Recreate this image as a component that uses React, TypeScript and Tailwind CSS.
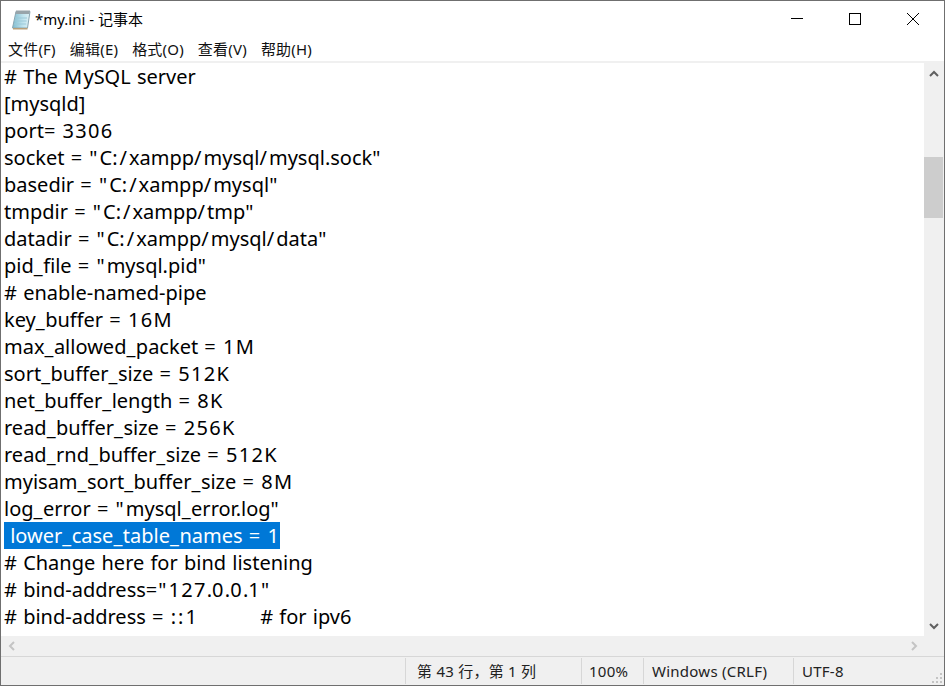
import React from 'react';

const lines = [
  '# The MySQL server',
  '[mysqld]',
  'port= 3306',
  'socket = "C:/xampp/mysql/mysql.sock"',
  'basedir = "C:/xampp/mysql"',
  'tmpdir = "C:/xampp/tmp"',
  'datadir = "C:/xampp/mysql/data"',
  'pid_file = "mysql.pid"',
  '# enable-named-pipe',
  'key_buffer = 16M',
  'max_allowed_packet = 1M',
  'sort_buffer_size = 512K',
  'net_buffer_length = 8K',
  'read_buffer_size = 256K',
  'read_rnd_buffer_size = 512K',
  'myisam_sort_buffer_size = 8M',
  'log_error = "mysql_error.log"',
];

const after = ['# Change here for bind listening', '# bind-address="127.0.0.1"', '# bind-address = ::1          # for ipv6'];

const menus = ['文件(F)', '编辑(E)', '格式(O)', '查看(V)', '帮助(H)'];

// the reference font sets these glyphs wider than Noto Sans does
function spacingFor(ch: string) {
  if (/[/":]/.test(ch)) return 'tracking-[2px]';
  if (ch === 'M') return 'tracking-[1.2px]';
  if (/[0-9]/.test(ch)) return 'tracking-[1.3px]';
  if (ch === '=' || ch === ' ') return 'tracking-[1px]';
  if (ch === '_') return 'tracking-[0.5px]';
  return '';
}

function Line({ text }: { text: string }) {
  const parts = text.match(/[/":M0-9= _]|[^/":M0-9= _]+/g) ?? [];
  return (
    <>
      {parts.map((p, i) => (
        <span key={i} className={spacingFor(p)}>
          {p}
        </span>
      ))}
    </>
  );
}

function NotepadIcon() {
  return (
    <svg width="20" height="21" viewBox="0 0 20 21">
      <defs>
        <linearGradient id="page" x1="0" y1="0" x2="1" y2="0">
          <stop offset="0" stopColor="#7fbccf" />
          <stop offset="0.6" stopColor="#bfe3ee" />
          <stop offset="1" stopColor="#dff1f6" />
        </linearGradient>
      </defs>
      <path d="M5 2.5 L19 2.5 L16.5 19 L1.5 19 Z" fill="url(#page)" stroke="#8aa6b2" strokeWidth="1" />
      <path d="M5 1.5 L19 1.5 L18.4 5 L4.5 5 Z" fill="#98a4aa" />
      <path d="M4 9h12M3.6 12h12M3.2 15h12" stroke="#9cc9d8" strokeWidth="1" />
      <path d="M2 19 L16.5 19 L16.5 20.5 L2 20.5 Z" fill="#b89f78" />
    </svg>
  );
}

export default function App() {
  return (
    <div className="w-[945px] h-[686px] flex flex-col bg-white border border-[#6f6f6f] overflow-hidden font-['Noto_Sans','Noto_Sans_CJK_SC',sans-serif] text-black">
      {/* title bar */}
      <div className="h-[36px] flex items-center shrink-0">
        <div className="ml-[10px] mt-[1px]">
          <NotepadIcon />
        </div>
        <span className="ml-[4px] text-[15px]">*my.ini - 记事本</span>
        <div className="ml-auto flex items-center pr-[14px]">
          <svg width="14" height="14" viewBox="0 0 14 14" className="mr-[44px]">
            <path d="M1 6.5h12" stroke="#000" strokeWidth="1" />
          </svg>
          <svg width="14" height="14" viewBox="0 0 14 14" className="mr-[44px]">
            <rect x="1.5" y="1.5" width="11" height="11" fill="none" stroke="#000" strokeWidth="1" />
          </svg>
          <svg width="14" height="14" viewBox="0 0 14 14" className="mr-[10px]">
            <path d="M1 1l12 12M13 1L1 13" stroke="#000" strokeWidth="1" />
          </svg>
        </div>
      </div>

      {/* menu */}
      <div className="h-[24px] flex items-center shrink-0 pl-[7px] gap-[14px] text-[15px] tracking-[0.2px] text-[#111]">
        {menus.map((m) => (
          <span key={m}>{m}</span>
        ))}
      </div>
      <div className="h-[2px] bg-[#f0f0f0] shrink-0" />

      {/* editor + vertical scrollbar */}
      <div className="flex-1 flex min-h-0">
        <div className="flex-1 pl-[3px] overflow-hidden text-[20px] leading-[27px] whitespace-pre">
          {lines.map((l) => (
            <div key={l} className="h-[27px]">
              <Line text={l} />
            </div>
          ))}
          <div className="h-[27px]">
            <span className="inline-block bg-[#0078d7] text-white h-[27px]">
              <Line text=" lower_case_table_names = 1" />
            </span>
          </div>
          {after.map((l) => (
            <div key={l} className="h-[27px]">
              <Line text={l} />
            </div>
          ))}
        </div>
        <div className="w-[20px] shrink-0 flex flex-col bg-[#f0f0f0]">
          <div className="h-[20px] w-[19px] flex items-center justify-center">
            <svg width="10" height="7" viewBox="0 0 10 7">
              <path d="M1 6l4-4 4 4" fill="none" stroke="#606060" strokeWidth="2" />
            </svg>
          </div>
          <div className="mt-[74px] h-[61px] w-[19px] bg-[#cdcdcd]" />
          <div className="mt-auto h-[20px] w-[19px] flex items-center justify-center">
            <svg width="10" height="7" viewBox="0 0 10 7">
              <path d="M1 1l4 4 4-4" fill="none" stroke="#606060" strokeWidth="2" />
            </svg>
          </div>
        </div>
      </div>

      {/* horizontal scrollbar */}
      <div className="h-[20px] shrink-0 flex items-center justify-between bg-[#f0f0f0] pl-[7px] pr-[26px]">
        <svg width="7" height="10" viewBox="0 0 7 10">
          <path d="M6 1L2 5l4 4" fill="none" stroke="#c4c4c4" strokeWidth="2" />
        </svg>
        <svg width="7" height="10" viewBox="0 0 7 10">
          <path d="M1 1l4 4-4 4" fill="none" stroke="#c4c4c4" strokeWidth="2" />
        </svg>
      </div>

      {/* status bar */}
      <div className="h-[29px] shrink-0 flex items-stretch bg-[#f0f0f0] border-t border-[#d7d7d7] text-[15px] tracking-[0.25px] text-[#222]">
        <div className="w-[404px]" />
        <div className="w-[176px] border-l border-[#d7d7d7] my-[1px] pl-[11px] flex items-center">第 43 行，第 1 列</div>
        <div className="w-[62px] border-l border-[#d7d7d7] my-[1px] pl-[7px] flex items-center">100%</div>
        <div className="w-[150px] border-l border-[#d7d7d7] my-[1px] pl-[8px] flex items-center">Windows (CRLF)</div>
        <div className="flex-1 border-l border-[#d7d7d7] my-[1px] pl-[8px] flex items-center relative">
          UTF-8
          <svg width="12" height="12" viewBox="0 0 12 12" className="absolute right-[1px] bottom-0">
            <path d="M9 1h2v2H9zM5 5h2v2H5zM9 5h2v2H9zM1 9h2v2H1zM5 9h2v2H5zM9 9h2v2H9z" fill="#c4c4c4" />
          </svg>
        </div>
      </div>
    </div>
  );
}
